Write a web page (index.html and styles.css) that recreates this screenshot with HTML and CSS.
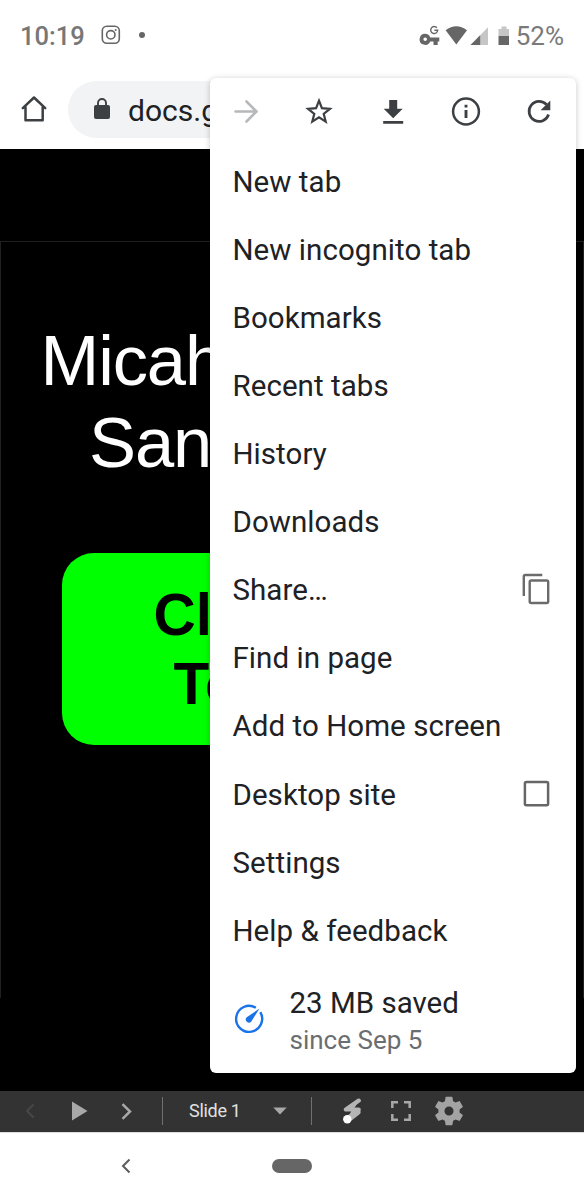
FILE: index.html
```html
<!DOCTYPE html>
<html lang="en">
<head>
<meta charset="utf-8">
<title>Browser menu</title>
<link rel="stylesheet" href="styles.css">
</head>
<body>
<div class="phone">
  <header class="status">
    <span class="clock">10:19</span>
    <svg class="insta" width="20" height="20" viewBox="0 0 20 20" fill="none" stroke="#666" stroke-width="1.6"><rect x="1.3" y="1.3" width="17" height="17" rx="4.5"/><circle cx="9.8" cy="9.8" r="4.2"/><circle cx="14.7" cy="4.9" r="1" fill="#666" stroke="none"/></svg>
    <span class="dot"></span>
    <svg class="signals" width="92" height="24" viewBox="0 0 92 24" fill="#666">
      <path fill-rule="evenodd" d="M6.2 9.8a5.5 5.5 0 1 0 5 7.6h3.3V21h4.2v-3.6h1.6v-4H11.2a5.5 5.5 0 0 0-5-3.6zm0 3.7a1.8 1.8 0 1 1 0 3.6 1.8 1.8 0 0 1 0-3.6z"/>
      <path d="M17.900 3.800A3.500 3.500 0 1 0 18.700 6.300H15.400" fill="none" stroke="#666" stroke-width="1.400"/>
      <path d="M26.600 6.200Q37.300 -1.600 48 6.200L37.300 20.600z"/>
      <path d="M69 3.300V21H51.500z" fill="#c6c6c6"/><path d="M61.200 11.200V21H51.500z"/>
      <path d="M79.500 5h3V2.500h5v2.500h2.500V12H79.500z" fill="#c6c6c6"/><path d="M79.500 12H90v9H79.500z"/>
    </svg>
    <span class="percent">52%</span>
  </header>
  <div class="address-row">
    <svg class="home" width="28" height="28" viewBox="0 0 28 28" fill="none" stroke="#3c4043" stroke-width="2.500" stroke-linejoin="round" stroke-linecap="round"><path d="M2.800 13.200 14 2.500 25.200 13.200M5.500 12V25.300H22.700V12"/></svg>
    <div class="omnibox">
      <svg width="16" height="21" viewBox="0 0 16 21"><rect x="0" y="7" width="16" height="14" rx="2" fill="#3c4043"/><path d="M4 8V5a4 4 0 0 1 8 0v3" fill="none" stroke="#3c4043" stroke-width="1.900"/></svg>
      <span>docs.g</span>
    </div>
  </div>
  <main class="deck">
    <div class="slide">
      <div class="title"><div class="first">Micah</div><div class="second">San</div></div>
      <div class="button"><div class="first-line">Cl</div><div class="second-line">To</div></div>
    </div>
  </main>
  <div class="toolbar">
    <svg class="prev" width="10" height="16" viewBox="0 0 10 16" fill="none" stroke="#474747" stroke-width="2"><path d="M8.500 1.500 2 8l6.500 6.500"/></svg>
    <svg class="play" width="16" height="20" viewBox="0 0 16 20" fill="#a8a8a8"><path d="M0 .5 15.500 10 0 19.500z"/></svg>
    <svg class="next" width="11" height="17" viewBox="0 0 11 17" fill="none" stroke="#a8a8a8" stroke-width="2.500"><path d="M1.500 1.200 9 8.500l-7.500 7.300"/></svg>
    <span class="divider"></span>
    <span class="slide-label">Slide 1</span>
    <svg class="caret" width="14" height="8" viewBox="0 0 14 8" fill="#a8a8a8"><path d="M.3.5h13.400L7 7.500z"/></svg>
    <span class="divider second-divider"></span>
    <svg class="laser" width="20" height="26" viewBox="0 0 20 26"><path d="M15.800 2.500 3 11.500H9L5 20 15.800 12.200H10L15.800 3z" fill="#b5b5b5"/><path d="M15.800 2.600 2.900 11.500H15.700L5 20.500" fill="none" stroke="#b5b5b5" stroke-width="4.200" stroke-linejoin="round" stroke-linecap="round"/><path d="M14.300 14 6 20.500" stroke="#b5b5b5" stroke-width="6.400" stroke-linecap="round"/><circle cx="4.300" cy="21.200" r="4.200" fill="#fff"/></svg>
    <svg class="full" width="20" height="20" viewBox="0 0 20 20" fill="none" stroke="#a8a8a8" stroke-width="2.500"><path d="M1.300 7V1.300H7M13 1.300h5.700V7M18.700 13v5.700H13M7 18.700H1.300V13"/></svg>
    <svg class="gear" width="34" height="34" viewBox="0 0 24 24" fill="#a3a3a3"><path d="M19.430 12.980c.04-.32.07-.64.07-.98s-.03-.66-.07-.98l2.110-1.650c.19-.15.24-.42.12-.64l-2-3.460c-.12-.22-.39-.3-.61-.22l-2.490 1c-.52-.4-1.080-.73-1.690-.98l-.38-2.650C14.460 2.180 14.250 2 14 2h-4c-.25 0-.46.18-.49.42l-.38 2.650c-.61.25-1.170.59-1.690.98l-2.490-1c-.23-.09-.49 0-.61.22l-2 3.460c-.13.22-.07.49.12.64l2.110 1.650c-.04.32-.07.65-.07.98s.03.66.07.98l-2.110 1.650c-.19.15-.24.42-.12.64l2 3.460c.12.22.39.3.61.22l2.490-1c.52.4 1.080.73 1.690.98l.38 2.650c.03.24.24.42.49.42h4c.25 0 .46-.18.49-.42l.38-2.650c.61-.25 1.170-.59 1.690-.98l2.490 1c.23.09.49 0 .61-.22l2-3.460c.12-.22.07-.49-.12-.64l-2.110-1.650zM12 15.200A3.200 3.200 0 1 1 12 8.800a3.200 3.200 0 0 1 0 6.400z"/></svg>
  </div>
  <nav class="system-nav">
    <svg width="10" height="16" viewBox="0 0 10 16" fill="none" stroke="#5c5c5c" stroke-width="2"><path d="M8.500 1.500 2 8l6.500 6.500"/></svg>
    <span class="pill"></span>
  </nav>

  <section class="menu">
    <div class="actions">
      <svg viewBox="0 0 32 32" fill="none" stroke="#b6b8ba" stroke-width="2.600" stroke-linecap="round" stroke-linejoin="round"><path d="M5.500 16.500H26M16.500 6.500l10 10-10 10"/></svg>
      <svg viewBox="0 0 32 32" fill="none" stroke="#3c4043" stroke-width="2.200"><path d="m16 5.700 2.900 7.500 8 .6-6.200 5 2 7.800L16 22.300l-6.700 4.300 2-7.800-6.200-5 8-.6z"/></svg>
      <svg viewBox="0 0 32 32" fill="#3c4043"><path d="M12.200 5h8v8.700h5.500L16.200 23.200 6.700 13.700h5.500zM6.200 26h20v2.700h-20z"/></svg>
      <svg viewBox="0 0 32 32" fill="none" stroke="#3c4043" stroke-width="2.500"><circle cx="16" cy="16.500" r="12.900"/><path d="M16 15v8M16 9.700v2.800" stroke-width="2.900"/></svg>
      <svg viewBox="0 0 32 32"><path d="M23.500 9.700A10 10 0 1 0 25.600 19.500" fill="none" stroke="#3c4043" stroke-width="2.700"/><path d="M27.300 5.500v9.700h-9.700z" fill="#3c4043"/></svg>
    </div>
    <ul class="items">
      <li>New tab</li>
      <li>New incognito tab</li>
      <li>Bookmarks</li>
      <li>Recent tabs</li>
      <li>History</li>
      <li>Downloads</li>
      <li>Share…<svg class="copy" width="28" height="32" viewBox="0 0 28 32" fill="none" stroke="#6b6b6b" stroke-width="2.400"><path d="M1.800 23V3.500a1.500 1.500 0 0 1 1.500-1.500H20.300"/><rect x="7.700" y="7.500" width="18.500" height="22.500" rx="1.500"/></svg></li>
      <li>Find in page</li>
      <li>Add to Home screen</li>
      <li>Desktop site<svg width="28" height="32" viewBox="0 0 28 32" fill="none" stroke="#666" stroke-width="2.500"><rect x="2.900" y="3.100" width="23.200" height="23.200" rx="1.500"/></svg></li>
      <li>Settings</li>
      <li>Help &amp; feedback</li>
    </ul>
    <div class="savings">
      <svg width="30" height="30" viewBox="0 0 30 30"><path d="M21.800 3.700A13 13 0 1 0 26.300 8.200" fill="none" stroke="#1a73e8" stroke-width="2.400"/><path d="M25.500 4.500 17.300 17.500A3 3 0 1 1 12.700 13.200z" fill="#1a73e8"/></svg>
      <div><div class="saved">23 MB saved</div><div class="since">since Sep 5</div></div>
    </div>
  </section>
</div>
</body>
</html>
```
FILE: styles.css
```css
* { box-sizing: border-box; }
body { margin: 0; background: #fff; font-family: Roboto, sans-serif; }
svg { display: block; flex: none; }
.phone { position: relative; width: 584px; height: 1200px; overflow: hidden; display: flex; flex-direction: column; }

.status { height: 72px; flex: none; display: flex; align-items: center; padding: 0 20px; color: #666; }
.clock { width: 81px; font-size: 25.500px; font-weight: 500; color: #777; }
.insta { margin-top: -3px; }
.dot { width: 6px; height: 6px; border-radius: 50%; background: #666; margin: -3px 0 0 18px; }
.signals { margin: -1px 0 0 274px; }
.percent { margin-left: 5px; font-size: 26px; color: #7a7a7a; white-space: nowrap; }

.address-row { height: 77px; flex: none; display: flex; align-items: flex-start; padding: 8.500px 0 0 20px; }
.home { margin: 14.500px 20px 0 0; }
.omnibox { height: 57px; width: 496px; border-radius: 29px; background: #f1f3f4; display: flex; align-items: center; padding-left: 26px; font-size: 30px; color: #202124; }
.omnibox svg { margin-top: -1px; }
.omnibox span { margin-left: 18px; margin-top: 2px; }

.deck { height: 942px; flex: none; background: #000; padding-top: 92px; }
.slide { height: 757px; border: 1.500px solid #202020; border-bottom: 0; padding-top: 78px; font-family: "Liberation Sans", Arial, sans-serif; }
.title { color: #fff; font-size: 70.500px; line-height: 82px; height: 164px; letter-spacing: -1.100px; }
.first { padding-left: 39.500px; }
.second { padding-left: 88px; }
.button { margin: 69px 0 0 61px; width: 460px; height: 192px; background: #0f0; border-radius: 32px; color: #000; font-weight: 700; font-size: 58.500px; line-height: 68.500px; padding-top: 28px; }
.first-line { padding-left: 91.500px; }
.second-line { padding-left: 111.500px; }

.toolbar { height: 41px; flex: none; display: flex; align-items: center; background: #333; padding: 0 0 2px 25px; }
.play { margin-left: 37px; }
.next { margin: 1px 0 0 33px; }
.divider { width: 1px; height: 28px; margin-left: 30px; background: #707070; }
.slide-label { width: 84px; margin-left: 26px; color: #e0e0e0; font-size: 18px; letter-spacing: -.3px; }
.second-divider { margin-left: 24px; }
.laser { margin-left: 31px; }
.full { margin-left: 28px; }
.gear { margin-left: 21px; }

.system-nav { height: 68px; flex: none; display: flex; align-items: center; border-top: 1px solid #ddd; padding: 0 0 2px 121px; }
.pill { width: 40px; height: 14px; margin-left: 141px; border-radius: 7px; background: #666; }

.menu { position: absolute; left: 210px; top: 77.500px; width: 366px; height: 995.500px; background: #fff; border-radius: 6px; box-shadow: 0 1px 6px rgba(0,0,0,.22); color: #202124; }
.actions { height: 70.200px; display: flex; justify-content: space-between; padding: 17px 21px 0 20px; }
.actions svg { width: 32px; height: 32px; }
.items { list-style: none; margin: 0; padding: 0 26px 0 22.500px; }
.items li { height: 68.100px; display: flex; align-items: center; justify-content: space-between; font-size: 29.500px; letter-spacing: .05px; white-space: nowrap; }
.copy { margin-top: -3px; }
.savings { display: flex; align-items: center; padding: 19.500px 0 0 24px; }
.savings > svg { margin-top: -5px; }
.savings > div { margin-left: 25.500px; }
.saved { font-size: 29.500px; line-height: 39px; }
.since { font-size: 26px; line-height: 35px; color: #6b6e71; }
```
